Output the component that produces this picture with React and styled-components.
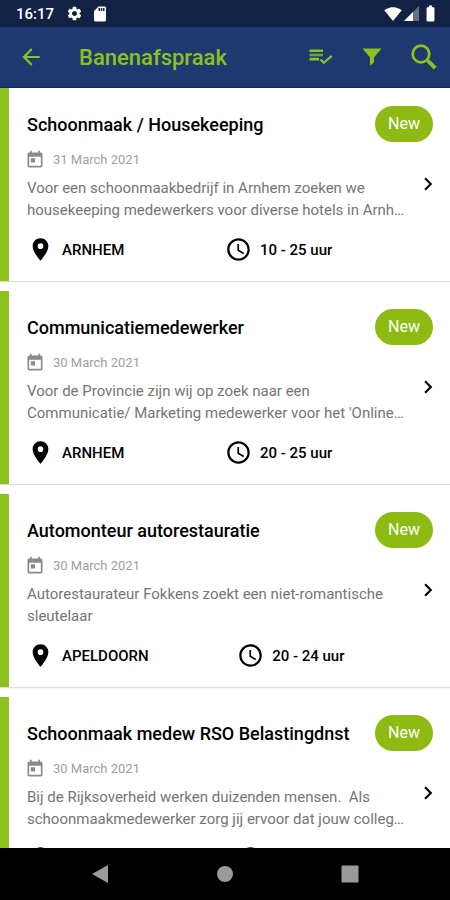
import React from 'react';
import styled, { createGlobalStyle } from 'styled-components';
import {
    MdAccessTime,
    MdArrowBack,
    MdBatteryFull,
    MdChevronRight,
    MdLocationOn,
    MdSdStorage,
    MdSettings,
    MdSignalWifi4Bar,
    MdToday,
} from 'react-icons/md';

const jobs = [
    {
        title: 'Schoonmaak / Housekeeping',
        date: '31 March 2021',
        text: 'Voor een schoonmaakbedrijf in Arnhem zoeken we\nhousekeeping medewerkers voor diverse hotels in Arnh…',
        place: 'ARNHEM',
        hours: '10 - 25 uur',
    },
    {
        title: 'Communicatiemedewerker',
        date: '30 March 2021',
        text: "Voor de Provincie zijn wij op zoek naar een\nCommunicatie/ Marketing medewerker voor het 'Online…",
        place: 'ARNHEM',
        hours: '20 - 25 uur',
    },
    {
        title: 'Automonteur autorestauratie',
        date: '30 March 2021',
        text: 'Autorestaurateur Fokkens zoekt een niet-romantische\nsleutelaar',
        place: 'APELDOORN',
        hours: '20 - 24 uur',
    },
    {
        title: 'Schoonmaak medew RSO Belastingdnst',
        date: '30 March 2021',
        text: 'Bij de Rijksoverheid werken duizenden mensen.  Als\nschoonmaakmedewerker zorg jij ervoor dat jouw colleg…',
        place: 'APELDOORN',
        hours: '20 - 24 uur',
    },
];

function App() {
    return (
        <Screen>
            <GlobalStyle />
            <StatusBar>
                <span>16:17</span>
                <MdSettings size={17} />
                <MdSdStorage size={18} />
                <StatusRight>
                    <MdSignalWifi4Bar size={18} />
                    <SignalIcon />
                    <MdBatteryFull size={19} />
                </StatusRight>
            </StatusBar>
            <Header>
                <IconButton aria-label="Back"><MdArrowBack size={26} /></IconButton>
                <h1>Banenafspraak</h1>
                <Actions>
                    <IconButton aria-label="Saved"><ChecklistIcon /></IconButton>
                    <IconButton aria-label="Filter"><FunnelIcon /></IconButton>
                    <IconButton aria-label="Search"><SearchIcon /></IconButton>
                </Actions>
            </Header>
            <List>
                {jobs.map((job) => <JobCard key={job.title} job={job} />)}
            </List>
            <NavBar>
                <NavButton aria-label="Back">
                    <svg width="18" height="20" viewBox="0 0 18 20"><path d="M17 1v18L1 10z" fill="currentColor" /></svg>
                </NavButton>
                <NavButton aria-label="Home">
                    <svg width="18" height="18" viewBox="0 0 18 18"><circle cx="9" cy="9" r="8" fill="currentColor" /></svg>
                </NavButton>
                <NavButton aria-label="Recent apps">
                    <svg width="18" height="18" viewBox="0 0 18 18"><rect width="17" height="17" x="0.5" y="0.5" rx="1" fill="currentColor" /></svg>
                </NavButton>
            </NavBar>
        </Screen>
    )
}

export default App;

function JobCard({ job }) {
    return (
        <Card>
            <Top>
                <h2>{job.title}</h2>
                <Badge>New</Badge>
            </Top>
            <Middle>
                <div>
                    <DateRow>
                        <MdToday size={20} />
                        <span>{job.date}</span>
                    </DateRow>
                    <Summary>{job.text}</Summary>
                </div>
                <OpenButton aria-label={job.title}><MdChevronRight size={26} /></OpenButton>
            </Middle>
            <Bottom>
                <Fact>
                    <MdLocationOn size={27} />
                    <span>{job.place}</span>
                </Fact>
                <Fact $fill>
                    <MdAccessTime size={27} />
                    <span>{job.hours}</span>
                </Fact>
            </Bottom>
        </Card>
    )
}

function SignalIcon() {
    return (
        <svg width="15" height="15" viewBox="0 0 15 15">
            <path d="M15 0v15H0z" fill="#fff" opacity="0.35" />
            <path d="M9 6v9H0z" fill="#fff" />
        </svg>
    )
}

function ChecklistIcon() {
    return (
        <svg width="24" height="16" viewBox="0 0 24 16">
            <path d="M0.5 0.5h13.5v2.6H0.5zM0.5 8.8h9.5v2.8H0.5z" fill="currentColor" />
            <path d="M0.5 4.7h13.5v2.6H0.5z" fill="currentColor" opacity="0.75" />
            <path d="M11.5 10.5l3.3 3.3 8-7" fill="none" stroke="currentColor" strokeWidth="2.2" />
        </svg>
    )
}

function FunnelIcon() {
    return (
        <svg width="20" height="18" viewBox="0 0 20 18">
            <path d="M0.5 0.5h19L12 9.5v5L8 17.5v-8z" fill="currentColor" />
        </svg>
    )
}

function SearchIcon() {
    return (
        <svg width="26" height="26" viewBox="0 0 26 26" fill="none" stroke="currentColor">
            <circle cx="10" cy="10" r="8.3" strokeWidth="2.8" />
            <path d="M16 16l1.5 1.5" strokeWidth="2.6" />
            <path d="M17.2 17.2l7 7" strokeWidth="4" />
        </svg>
    )
}

const GlobalStyle = createGlobalStyle`
* {
    box-sizing: border-box;
}
body {
    margin: 0;
    background-color: #fff;
    font-family: Roboto, "Liberation Sans", sans-serif;
}
h1, h2, p {
    margin: 0;
    font-weight: 500;
}
button {
    padding: 0;
    border: none;
    background: none;
    color: inherit;
    cursor: pointer;
}
svg {
    display: block;
    flex-shrink: 0;
}
`

const Screen = styled.div`
display: flex;
flex-direction: column;
height: 100vh;
`

const StatusBar = styled.div`
display: flex;
align-items: center;
gap: 8px;
height: 27px;
padding: 0 10px 0 16px;
flex-shrink: 0;
background-color: #122244;
color: #fff;
font-size: 15px;
font-weight: 500;
span {
    margin-right: 4px;
}
`

const StatusRight = styled.div`
display: flex;
align-items: center;
gap: 2px;
margin-left: auto;
`

const Header = styled.header`
display: flex;
align-items: center;
height: 61px;
padding: 0 13px 0 18px;
flex-shrink: 0;
background-color: #1d3970;
border-bottom: 1px solid #152c5e;
color: #8dc11e;
h1 {
    margin-left: 35px;
    font-size: 22px;
}
`

const Actions = styled.div`
display: flex;
align-items: center;
gap: 29px;
margin-left: auto;
`

const IconButton = styled.button`
display: flex;
`

const List = styled.main`
flex: 1;
min-height: 0;
overflow-y: auto;
scrollbar-width: none;
`

const Card = styled.article`
margin-bottom: 10px;
padding: 18px 17px 18px 18px;
border-left: 9px solid #8dc11e;
box-shadow: 0 1px 1px #ddd;
color: #000;
`

const Top = styled.div`
display: flex;
align-items: center;
justify-content: space-between;
h2 {
    font-size: 18px;
}
`

const Badge = styled.span`
padding: 0 13px;
border-radius: 18px;
background-color: #8dbb14;
color: #fff;
font-size: 16px;
line-height: 36px;
`

const Middle = styled.div`
display: flex;
align-items: center;
justify-content: space-between;
margin-top: 8px;
`

const DateRow = styled.div`
display: flex;
align-items: center;
gap: 8px;
margin-left: -2px;
color: #8a8a8a;
font-size: 13px;
line-height: 20px;
span {
    color: #a0a0a0;
}
`

const Summary = styled.p`
margin-top: 7px;
color: #757575;
font-size: 15px;
font-weight: 400;
line-height: 22px;
white-space: pre-wrap;
`

const OpenButton = styled.button`
display: flex;
margin: 0 -8px 4px 0;
`

const Bottom = styled.div`
display: flex;
align-items: center;
margin-top: 15px;
`

const Fact = styled.div`
display: flex;
align-items: center;
gap: 8px;
flex: ${(props) => (props.$fill ? '1' : 'none')};
justify-content: center;
font-size: 15px;
font-weight: 500;
`

const NavBar = styled.nav`
display: flex;
align-items: center;
justify-content: center;
gap: 107px;
height: 52px;
flex-shrink: 0;
background-color: #000;
color: #9a9a9a;
`

const NavButton = styled.button`
display: flex;
`
